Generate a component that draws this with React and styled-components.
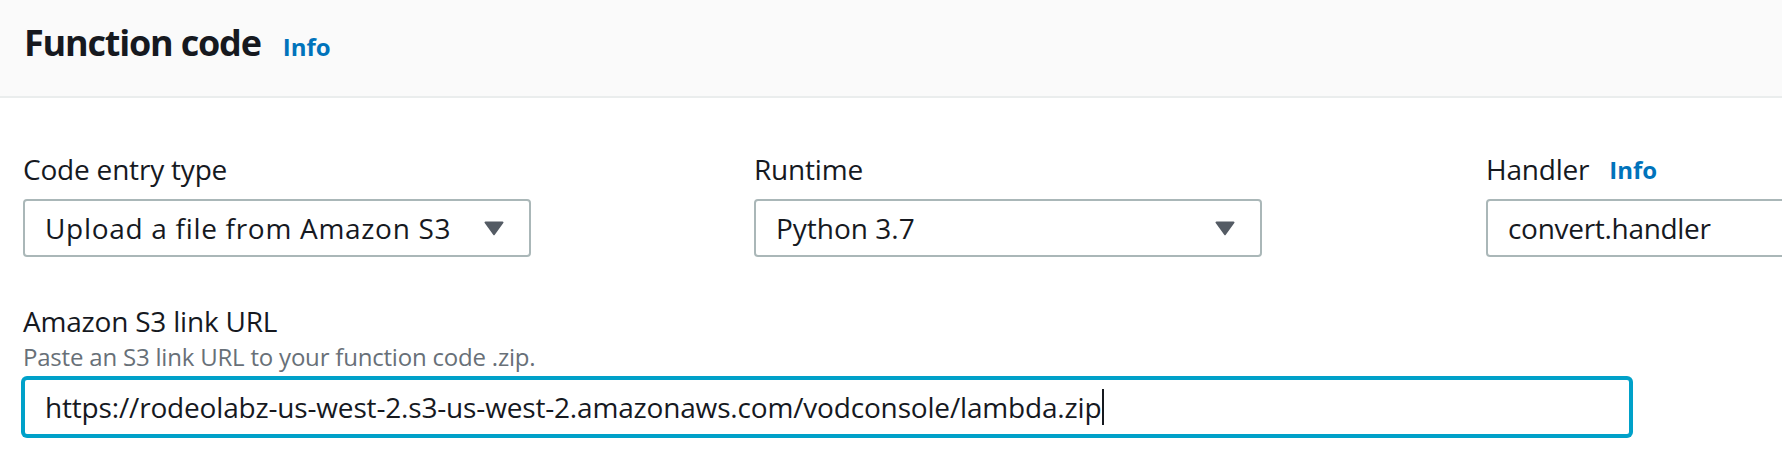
import React from "react";
import styled, { createGlobalStyle } from "styled-components";

const GlobalStyle = createGlobalStyle`
  body {
    margin: 0;
    background: #fff;
    color: #16191f;
    font-family: "Open Sans", "Noto Sans", "Liberation Sans", sans-serif;
    overflow: hidden;
  }
`;

const Panel = styled.section`
  width: 1782px;
  height: 468px;
  background: #fff;
  overflow: hidden;
`;

const Header = styled.header`
  box-sizing: border-box;
  height: 98px;
  padding: 19px 24px 0;
  background: #fafafa;
  border-bottom: 2px solid #eaeded;
  display: flex;
  align-items: baseline;
  gap: 22px;
`;

const Title = styled.h2`
  margin: 0;
  font-size: 36px;
  line-height: 48px;
  font-weight: 700;
  letter-spacing: -1.2px;
  color: #16191f;
`;

const InfoLink = styled.a`
  font-size: 24px;
  font-weight: 700;
  color: #0073bb;
  text-decoration: none;
  cursor: pointer;
`;

const Content = styled.div`
  padding: 51px 0 0 23px;
`;

const FieldRow = styled.div`
  display: grid;
  grid-template-columns: 731px 732px 1fr;
  overflow: hidden;
`;

const Field = styled.div`
  display: flex;
  flex-direction: column;
  min-width: 0;
  margin-top: ${(p) => p.$top || 0}px;
`;

const LabelLine = styled.div`
  display: flex;
  align-items: flex-start;
  gap: 20px;
  height: ${(p) => p.$height || 40}px;
  line-height: ${(p) => p.$line || 40}px;
  margin-bottom: ${(p) => p.$gap || 0}px;
`;

const Label = styled.label`
  font-size: 28px;
  line-height: inherit;
  letter-spacing: -0.2px;
  color: #16191f;
  white-space: nowrap;
`;

const LabelInfo = styled(InfoLink)`
  line-height: inherit;
  padding-top: 1px;
`;

const Hint = styled.div`
  font-size: 24px;
  line-height: 32px;
  letter-spacing: -0.2px;
  color: #687078;
  margin-bottom: 5px;
`;

const SelectBox = styled.div`
  box-sizing: border-box;
  width: 508px;
  height: 58px;
  border: 2px solid #aab7b8;
  border-radius: 4px;
  background: #fff;
  display: flex;
  align-items: center;
  justify-content: space-between;
  padding: 0 25px 0 20px;
  font-size: 28px;
  letter-spacing: ${(p) => p.$spacing || 0}px;
  color: #16191f;
  white-space: nowrap;
`;

const TextBox = styled.div`
  box-sizing: border-box;
  flex-shrink: 0;
  width: ${(p) => p.$width}px;
  height: 58px;
  border: 2px solid ${(p) => (p.$focused ? "#00a1c9" : "#aab7b8")};
  box-shadow: ${(p) => (p.$focused ? "0 0 0 2px #00a1c9" : "none")};
  border-radius: 4px;
  background: #fff;
  display: flex;
  align-items: center;
  padding: 0 20px;
  font-size: 28px;
  letter-spacing: ${(p) => p.$spacing || 0}px;
  color: #16191f;
  white-space: nowrap;
`;

const Caret = styled.span`
  display: inline-block;
  width: 2px;
  height: 36px;
  background: #16191f;
  margin-left: 1px;
`;

function Triangle() {
  return (
    <svg width="20" height="16" viewBox="0 0 20 16">
      <path
        d="M1.5 1.5h17a1 1 0 0 1 .8 1.6l-8.5 11.6a1 1 0 0 1-1.6 0L.7 3.1a1 1 0 0 1 .8-1.6z"
        fill="#545b64"
      />
    </svg>
  );
}

export default function App() {
  return (
    <>
      <GlobalStyle />
      <Panel>
        <Header>
          <Title>Function code</Title>
          <InfoLink>Info</InfoLink>
        </Header>
        <Content>
          <FieldRow>
            <Field>
              <LabelLine $gap={10}>
                <Label>Code entry type</Label>
              </LabelLine>
              <SelectBox $spacing={0.7}>
                <span>Upload a file from Amazon S3</span>
                <Triangle />
              </SelectBox>
            </Field>
            <Field>
              <LabelLine $gap={10}>
                <Label>Runtime</Label>
              </LabelLine>
              <SelectBox>
                <span>Python 3.7</span>
                <Triangle />
              </SelectBox>
            </Field>
            <Field>
              <LabelLine $gap={10}>
                <Label>Handler</Label>
                <LabelInfo>Info</LabelInfo>
              </LabelLine>
              <TextBox $width={508} $spacing={-0.3}>
                convert.handler
              </TextBox>
            </Field>
          </FieldRow>
          <Field $top={45}>
            <LabelLine $height={39} $line={38}>
              <Label>Amazon S3 link URL</Label>
            </LabelLine>
            <Hint>Paste an S3 link URL to your function code .zip.</Hint>
            <TextBox $width={1608} $spacing={-0.17} $focused>
              https://rodeolabz-us-west-2.s3-us-west-2.amazonaws.com/vodconsole/lambda.zip
              <Caret />
            </TextBox>
          </Field>
        </Content>
      </Panel>
    </>
  );
}
